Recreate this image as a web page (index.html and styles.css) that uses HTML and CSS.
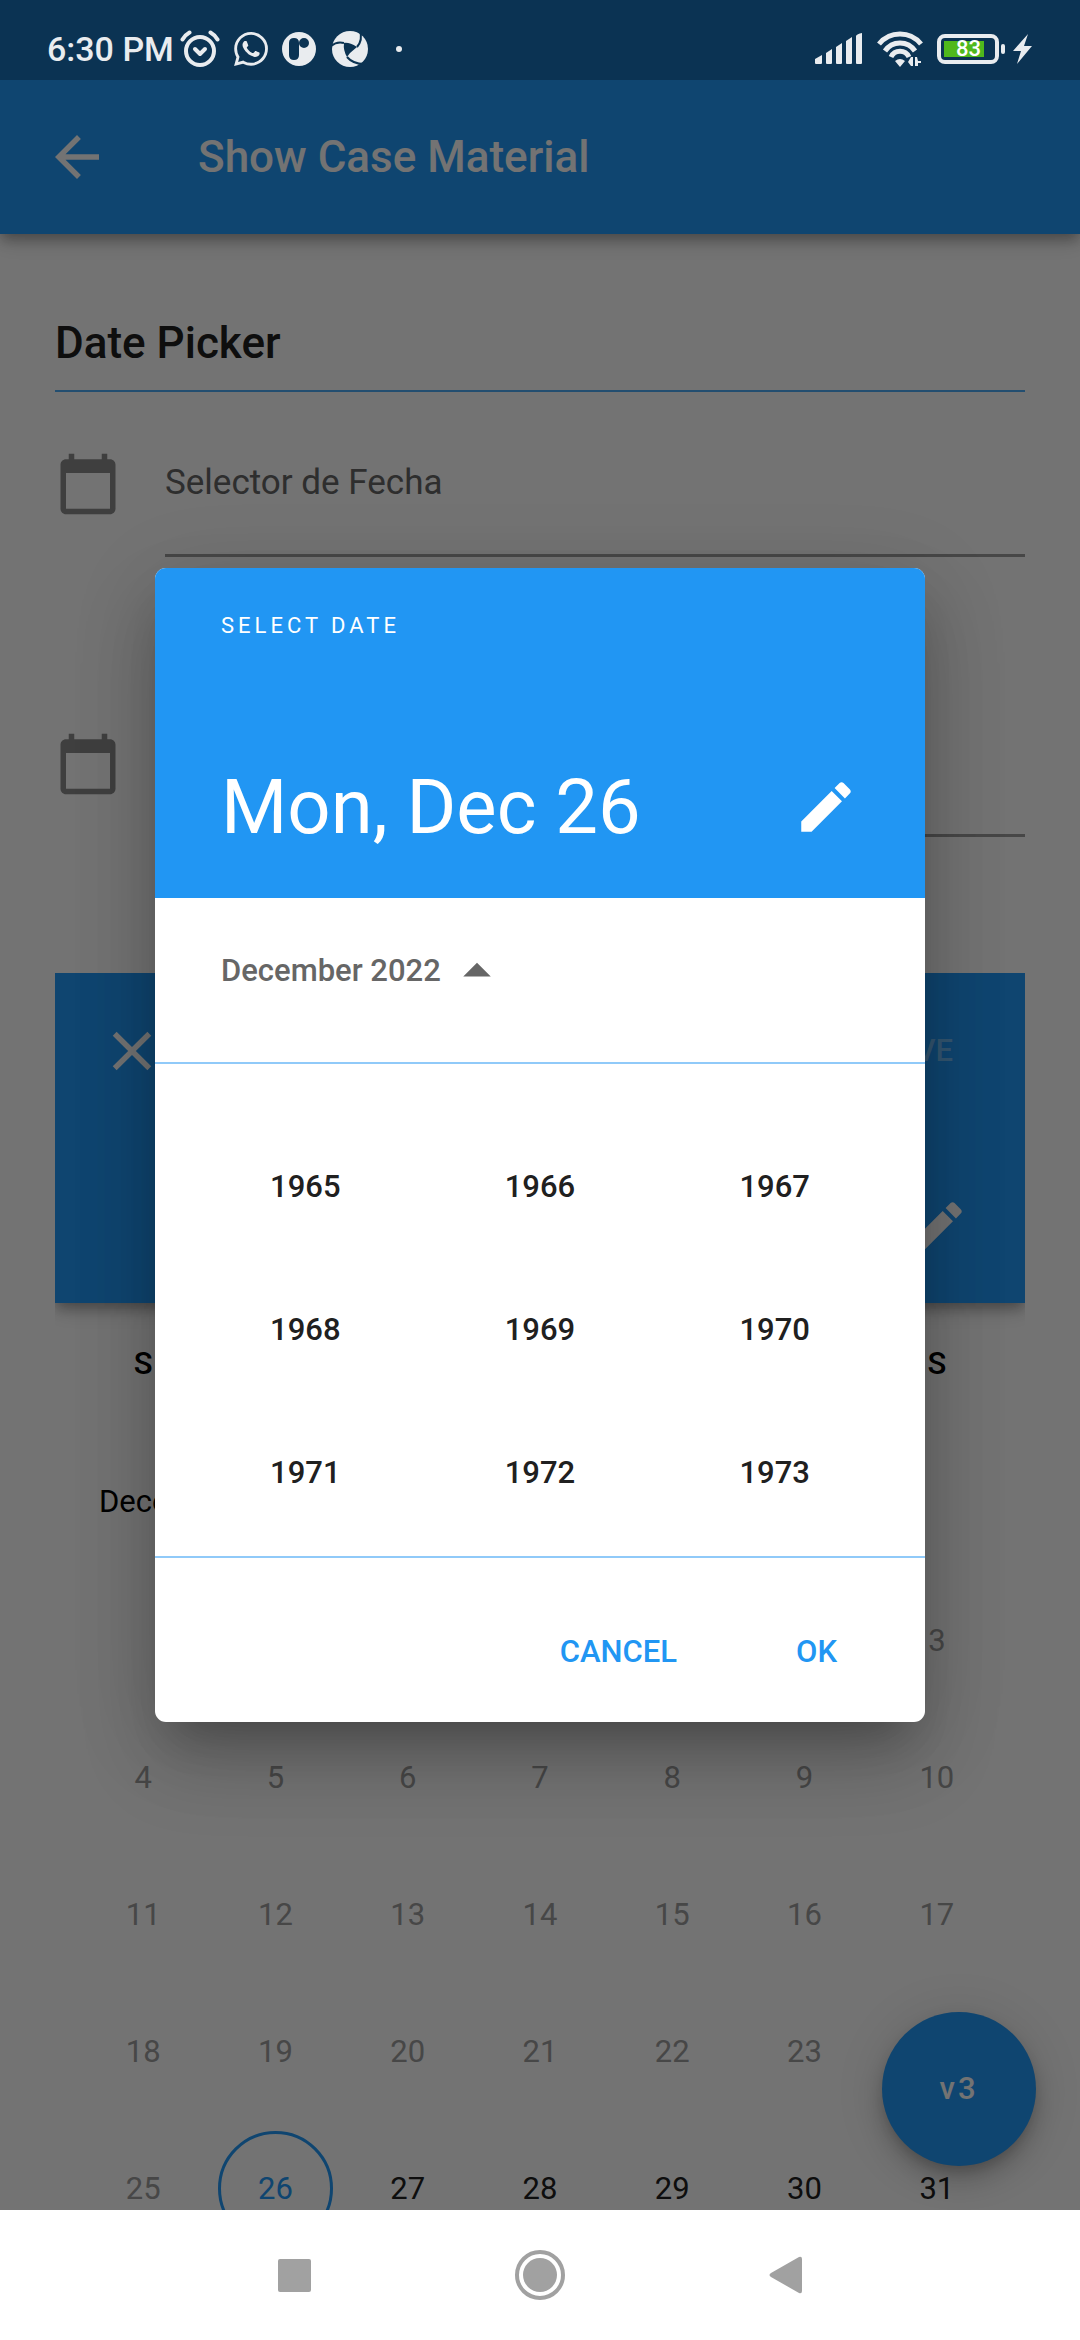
FILE: index.html
```html
<!DOCTYPE html>
<html lang="en">
<head>
<meta charset="utf-8">
<meta name="viewport" content="width=device-width, initial-scale=1">
<title>Show Case Material</title>
<link rel="stylesheet" href="styles.css">
</head>
<body>
<div class="device">
  <div class="screen">
    <header class="app-bar">
      <button class="icon-button" type="button" aria-label="Back">
        <svg class="icon" viewBox="0 0 24 24"><path d="M20 11H7.83l5.59-5.59L12 4l-8 8 8 8 1.41-1.41L7.83 13H20v-2z"/></svg>
      </button>
      <h1 class="app-title">Show Case Material</h1>
    </header>

    <main class="content">
      <h2 class="section-title">Date Picker</h2>

      <div class="field">
        <svg class="icon field-icon" viewBox="0 0 24 24"><path d="M20 3h-1V1h-2v2H7V1H5v2H4c-1.1 0-2 .9-2 2v16c0 1.1.9 2 2 2h16c1.1 0 2-.9 2-2V5c0-1.1-.9-2-2-2zm0 18H4V8h16v13z"/></svg>
        <input class="field-input" type="text" aria-label="Selector de Fecha" placeholder="Selector de Fecha">
      </div>
      <div class="field">
        <svg class="icon field-icon" viewBox="0 0 24 24"><path d="M20 3h-1V1h-2v2H7V1H5v2H4c-1.1 0-2 .9-2 2v16c0 1.1.9 2 2 2h16c1.1 0 2-.9 2-2V5c0-1.1-.9-2-2-2zm0 18H4V8h16v13z"/></svg>
        <input class="field-input" type="text" aria-label="Fecha">
      </div>

      <section class="range-picker">
        <div class="range-header">
          <div class="range-actions">
            <button class="icon-button" type="button" aria-label="Close">
              <svg class="icon" viewBox="0 0 24 24"><path d="M19 6.41L17.59 5 12 10.59 6.41 5 5 6.41 10.59 12 5 17.59 6.41 19 12 13.41 17.59 19 19 17.59 13.41 12z"/></svg>
            </button>
            <button class="text-button save-button" type="button" disabled>SAVE</button>
          </div>
          <div class="range-edit">
            <button class="icon-button" type="button" aria-label="Edit range">
              <svg class="icon" viewBox="0 0 24 24"><path d="M3 17.25V21h3.75L17.81 9.94l-3.75-3.75L3 17.25zM20.71 7.04c.39-.39.39-1.02 0-1.41l-2.34-2.34c-.39-.39-1.02-.39-1.41 0l-1.83 1.83 3.75 3.75 1.83-1.83z"/></svg>
            </button>
          </div>
        </div>
        <table class="calendar">
          <thead>
            <tr class="weekdays"><th>S</th><th>M</th><th>T</th><th>W</th><th>T</th><th>F</th><th>S</th></tr>
          </thead>
          <tbody>
            <tr><th class="month" colspan="7">December 2022</th></tr>
            <tr class="week past"><td></td><td></td><td></td><td></td><td></td><td></td><td>3</td></tr>
            <tr class="week past"><td>4</td><td>5</td><td>6</td><td>7</td><td>8</td><td>9</td><td>10</td></tr>
            <tr class="week past"><td>11</td><td>12</td><td>13</td><td>14</td><td>15</td><td>16</td><td>17</td></tr>
            <tr class="week past"><td>18</td><td>19</td><td>20</td><td>21</td><td>22</td><td>23</td><td>24</td></tr>
            <tr class="week"><td class="past-day">25</td><td><span class="today">26</span></td><td>27</td><td>28</td><td>29</td><td>30</td><td>31</td></tr>
          </tbody>
        </table>
      </section>
    </main>

    <button class="fab" type="button">v3</button>

    <div class="overlay">
      <section class="dialog" role="dialog" aria-label="Select date">
        <header class="dialog-header">
          <p class="overline">SELECT DATE</p>
          <div class="headline">
            <h2 class="headline-date">Mon, Dec 26</h2>
            <button class="icon-button" type="button" aria-label="Edit date">
              <svg class="icon" viewBox="0 0 24 24"><path d="M3 17.25V21h3.75L17.81 9.94l-3.75-3.75L3 17.25zM20.71 7.04c.39-.39.39-1.02 0-1.41l-2.34-2.34c-.39-.39-1.02-.39-1.41 0l-1.83 1.83 3.75 3.75 1.83-1.83z"/></svg>
            </button>
          </div>
        </header>
        <div class="mode-row">
          <button class="mode-button" type="button">December 2022
            <svg class="icon" viewBox="0 0 24 24"><path d="M7 14l5-5 5 5z"/></svg>
          </button>
        </div>
        <div class="years">
          <button class="year" type="button">1965</button>
          <button class="year" type="button">1966</button>
          <button class="year" type="button">1967</button>
          <button class="year" type="button">1968</button>
          <button class="year" type="button">1969</button>
          <button class="year" type="button">1970</button>
          <button class="year" type="button">1971</button>
          <button class="year" type="button">1972</button>
          <button class="year" type="button">1973</button>
        </div>
        <footer class="dialog-actions">
          <button class="text-button" type="button">CANCEL</button>
          <button class="text-button" type="button">OK</button>
        </footer>
      </section>
    </div>

    <div class="status-bar">
      <div class="status-left">
        <span class="clock">6:30 PM</span>
        <div class="notifications">
          <svg class="status-icon" viewBox="0 0 40 40">
            <circle cx="20" cy="22" r="14" fill="none" stroke="currentColor" stroke-width="4"/>
            <path d="M15 20l5 5 5-5" fill="none" stroke="currentColor" stroke-width="4" stroke-linecap="round" stroke-linejoin="round"/>
            <path d="M2.500 10.500Q5 6 9.500 3.500M30.500 3.500Q35 6 37.500 10.500" fill="none" stroke="currentColor" stroke-width="4" stroke-linecap="round"/>
          </svg>
          <svg class="status-icon app-icon" viewBox="0 0 24 24"><path d="M17.472 14.382c-.297-.149-1.758-.867-2.03-.967-.273-.099-.471-.148-.67.15-.197.297-.767.966-.94 1.164-.173.199-.347.223-.644.075-.297-.15-1.255-.463-2.39-1.475-.883-.788-1.48-1.761-1.653-2.059-.173-.297-.018-.458.13-.606.134-.133.298-.347.446-.52.149-.174.198-.298.298-.497.099-.198.05-.371-.025-.52-.075-.149-.669-1.612-.916-2.207-.242-.579-.487-.5-.669-.51-.173-.008-.371-.01-.57-.01-.198 0-.52.074-.792.372-.272.297-1.04 1.016-1.04 2.479 0 1.462 1.065 2.875 1.213 3.074.149.198 2.096 3.2 5.077 4.487.709.306 1.262.489 1.694.625.712.227 1.36.195 1.871.118.571-.085 1.758-.719 2.006-1.413.248-.694.248-1.289.173-1.413-.074-.124-.272-.198-.57-.347m-5.421 7.403h-.004a9.87 9.87 0 01-5.031-1.378l-.361-.214-3.741.982.998-3.648-.235-.374a9.86 9.86 0 01-1.510-5.260c.001-5.450 4.436-9.884 9.888-9.884 2.640 0 5.122 1.030 6.988 2.898a9.825 9.825 0 012.893 6.994c-.003 5.450-4.437 9.884-9.885 9.884m8.413-18.297A11.815 11.815 0 0012.050 0C5.495 0 .160 5.335.157 11.892c0 2.096.547 4.142 1.588 5.945L.057 24l6.305-1.654a11.882 11.882 0 005.683 1.448h.005c6.554 0 11.890-5.335 11.893-11.893a11.821 11.821 0 00-3.480-8.413Z"/></svg>
          <svg class="status-icon app-icon" viewBox="0 0 34 34">
            <path fill-rule="evenodd" d="M17 0a17 17 0 100 34 17 17 0 000-34zM12 6q5 0 5 5v12q0 5-5 5t-5-5V11q0-5 5-5zM22 6a5 5 0 110 10 5 5 0 010-10z"/>
          </svg>
          <svg class="status-icon" viewBox="0 0 40 40">
            <circle cx="20" cy="20" r="18"/>
            <path class="cut" d="M14 14Q19 13 27 18L20 24 17 28Q13 21 14 14z"/>
            <path class="cut-line" d="M1 17Q7 12 14 14M30 2Q33 11 27 18M17 28Q23 35 34 35"/>
          </svg>
        </div>
        <span class="more-dot"></span>
      </div>
      <div class="status-right">
        <svg class="signal" viewBox="0 0 48 32">
          <path d="M0 26l7-4v8q0 1-1 1H1q-1 0-1-1zM11 20l6-4v14q0 1-1 1h-4q-1 0-1-1zM21 14l6-4v20q0 1-1 1h-4q-1 0-1-1zM31 8l6-4v26q0 1-1 1h-4q-1 0-1-1zM41 3q1-2 6-3v30q0 1-1 1h-4q-1 0-1-1z"/>
        </svg>
        <svg class="wifi" viewBox="0 0 46 36">
          <path d="M2 13A27 27 0 0 1 44 13M8 20A18 18 0 0 1 38 20M14 26A10 10 0 0 1 32 26" fill="none" stroke="currentColor" stroke-width="5"/>
          <path d="M18 30q5-4 10 0l-5 6zM31 31l3-5h2v9h-2zM38 26h2l1 4h3v2h-3v3h-3z"/>
        </svg>
        <div class="battery"><span class="battery-level">83</span></div>
        <svg class="bolt" viewBox="0 0 20 30"><path d="M15 0L0 17h8L4 30 19 12h-8z"/></svg>
      </div>
    </div>
  </div>

  <nav class="nav-bar">
    <button class="nav-button" type="button" aria-label="Recents"><svg class="icon" viewBox="0 0 66 66"><rect x="17" y="17" width="33" height="33" rx="2"/></svg></button>
    <button class="nav-button" type="button" aria-label="Home"><svg class="icon" viewBox="0 0 66 66"><circle cx="33" cy="33" r="17"/><circle cx="33" cy="33" r="23" fill="none" stroke="currentColor" stroke-width="4"/></svg></button>
    <button class="nav-button" type="button" aria-label="Go back"><svg class="icon" viewBox="0 0 66 66"><path d="M18 31L46 15q3-1 3 2v32q0 3-3 2L18 35q-3-2 0-4z"/></svg></button>
  </nav>
</div>
</body>
</html>
```
FILE: styles.css
```css
:root {
  --blue: #2196f3;
  --line: #90caf9;
  --status: #e9ecef;
}

* {
  box-sizing: border-box;
}

body {
  margin: 0;
  font-family: Roboto, "Liberation Sans", sans-serif;
  font-size: 31px;
  line-height: 40px;
  color: #202020;
  background: #fff;
}

h1,
h2,
p {
  margin: 0;
}

button,
input {
  margin: 0;
  padding: 0;
  border: 0;
  border-radius: 0;
  font: inherit;
  color: inherit;
  background: none;
}

.icon {
  display: block;
  flex: none;
  width: 66px;
  height: 66px;
  fill: currentColor;
}

.icon-button {
  flex: none;
  color: #fafafa;
}

.device {
  display: flex;
  flex-direction: column;
  height: 100vh;
}

.screen {
  position: relative;
  flex: 1;
  display: flex;
  flex-direction: column;
  min-height: 0;
  overflow: hidden;
  background: #fafafa;
}

/* App bar */
.app-bar {
  position: relative;
  flex: none;
  display: flex;
  align-items: center;
  gap: 88px;
  height: 234px;
  padding: 80px 44px 0;
  color: #fafafa;
  background: var(--blue);
  box-shadow: 0 6px 11px -3px rgba(0, 0, 0, .2), 0 8px 14px rgba(0, 0, 0, .16), 0 3px 24px rgba(0, 0, 0, .12);
}

.app-title,
.section-title {
  font-size: 44px;
  font-weight: 500;
  line-height: 60px;
}

/* Page */
.content {
  flex: 1;
  min-height: 0;
  padding: 79px 55px 0;
  overflow: hidden;
}

.section-title {
  padding-bottom: 17px;
  margin-bottom: 59px;
  border-bottom: 2px solid rgba(33, 150, 243, .8);
}

.field {
  display: flex;
  gap: 44px;
  margin-bottom: 174px;
}

.field + .field {
  margin-bottom: 136px;
}

.field-icon {
  color: #898989;
}

.field-input {
  flex: 1;
  min-width: 0;
  height: 106px;
  padding-bottom: 41px;
  border-bottom: 3px solid #9b9b9b;
  font-size: 35px;
}

.field-input::placeholder {
  color: #646464;
  opacity: 1;
}

/* Inline range picker */
.range-picker {
  overflow: hidden;
}

.range-header {
  height: 330px;
  background: var(--blue);
  box-shadow: 0 6px 11px -3px rgba(0, 0, 0, .2), 0 8px 14px rgba(0, 0, 0, .16), 0 3px 24px rgba(0, 0, 0, .12);
}

.range-actions {
  display: flex;
  align-items: center;
  justify-content: space-between;
  height: 156px;
  padding: 0 72px 0 44px;
}

.range-edit {
  display: flex;
  align-items: center;
  justify-content: flex-end;
  height: 174px;
  padding: 22px 55px 0;
}

.calendar {
  width: calc(100% - 44px);
  margin: 0 22px;
  table-layout: fixed;
  border-collapse: collapse;
  text-align: center;
}

.calendar th,
.calendar td {
  padding: 0;
}

.weekdays {
  height: 122px;
  color: #000;
}

.weekdays th {
  font-weight: 500;
}

.calendar .month {
  height: 147px;
  padding: 6px 22px 0;
  font-weight: 400;
  text-align: left;
  color: #000;
}

.week {
  height: 137px;
}

.past,
.past-day {
  color: #9b9b9b;
}

.today {
  display: grid;
  place-items: center;
  width: 115px;
  height: 115px;
  margin: 0 auto;
  border: 3px solid var(--blue);
  border-radius: 50%;
  color: var(--blue);
}

.fab {
  position: absolute;
  right: 44px;
  bottom: 44px;
  width: 154px;
  height: 154px;
  border-radius: 50%;
  font-weight: 500;
  letter-spacing: 3px;
  color: #fafafa;
  background: var(--blue);
  box-shadow: 0 8px 14px -3px rgba(0, 0, 0, .2), 0 16px 28px rgba(0, 0, 0, .14), 0 3px 50px rgba(0, 0, 0, .12);
}

/* Dialog */
.overlay {
  position: absolute;
  inset: 0;
  display: flex;
  align-items: center;
  justify-content: center;
  padding: 80px 110px 0;
  background: rgba(0, 0, 0, .54);
}

.dialog {
  width: 100%;
  max-width: 770px;
  overflow: hidden;
  border-radius: 11px;
  background: #fff;
  box-shadow: 0 30px 41px -19px rgba(0, 0, 0, .2), 0 40px 80px rgba(0, 0, 0, .16), 0 16px 90px rgba(0, 0, 0, .12);
}

.dialog-header {
  display: flex;
  flex-direction: column;
  justify-content: space-between;
  height: 330px;
  padding: 38px 66px 41px;
  color: #fff;
  background: var(--blue);
}

.overline {
  font-size: 22px;
  letter-spacing: 4px;
}

.headline {
  display: flex;
  align-items: center;
  justify-content: space-between;
}

.headline .icon-button {
  color: #fff;
}

.headline-date {
  font-size: 76px;
  font-weight: 400;
  line-height: 100px;
}

.mode-row {
  display: flex;
  height: 166px;
  padding: 40px 66px;
  border-bottom: 2px solid var(--line);
}

.mode-button {
  display: flex;
  align-items: center;
  gap: 3px;
  height: 66px;
  font-weight: 500;
  color: #666;
}

.years {
  display: grid;
  grid-template-columns: repeat(3, 1fr);
  row-gap: 44px;
  padding: 73px 33px 34px;
  border-bottom: 2px solid var(--line);
}

.year {
  height: 99px;
  font-weight: 500;
}

.text-button {
  font-weight: 500;
  color: var(--blue);
}

.save-button {
  color: rgba(250, 250, 250, .38);
}

.dialog-actions {
  display: flex;
  align-items: center;
  justify-content: flex-end;
  gap: 119px;
  height: 164px;
  padding: 24px 88px 0;
}

/* Status bar */
.status-bar {
  position: absolute;
  top: 0;
  left: 0;
  right: 0;
  display: flex;
  justify-content: space-between;
  height: 80px;
  padding: 18px 47px 0;
  color: var(--status);
  background: rgba(0, 0, 0, .26);
}

.status-left,
.status-right {
  display: flex;
  align-items: center;
  height: 62px;
}

.status-left {
  gap: 6px;
}

.status-right {
  gap: 14px;
}

.clock {
  font-size: 34px;
  font-weight: 500;
}

.notifications {
  display: flex;
  align-items: center;
  gap: 14px;
}

.status-icon {
  width: 40px;
  height: 40px;
  fill: currentColor;
}

.app-icon {
  width: 34px;
  height: 34px;
}

.cut {
  fill: #0b3352;
}

.cut-line {
  fill: none;
  stroke: #0b3352;
  stroke-width: 2;
}

.more-dot {
  width: 6px;
  height: 6px;
  margin-left: 20px;
  border-radius: 50%;
  background: currentColor;
}

.status-right svg {
  fill: currentColor;
}

.signal {
  width: 48px;
  height: 32px;
}

.wifi {
  width: 46px;
  height: 36px;
}

.battery {
  position: relative;
  width: 62px;
  height: 30px;
  padding: 3px;
  border: 4px solid currentColor;
  border-radius: 8px;
}

.battery::after {
  content: "";
  position: absolute;
  top: 6px;
  right: -10px;
  width: 4px;
  height: 10px;
  border-radius: 2px;
  background: currentColor;
}

.battery-level {
  display: block;
  width: 40px;
  height: 16px;
  padding-left: 12px;
  font-size: 22px;
  font-weight: 500;
  line-height: 16px;
  color: #fff;
  background: #4fb81c;
}

.bolt {
  width: 20px;
  height: 30px;
}

/* System navigation */
.nav-bar {
  flex: none;
  display: flex;
  align-items: center;
  justify-content: center;
  gap: 180px;
  height: 130px;
  color: #a1a1a1;
  background: #fff;
}
```
